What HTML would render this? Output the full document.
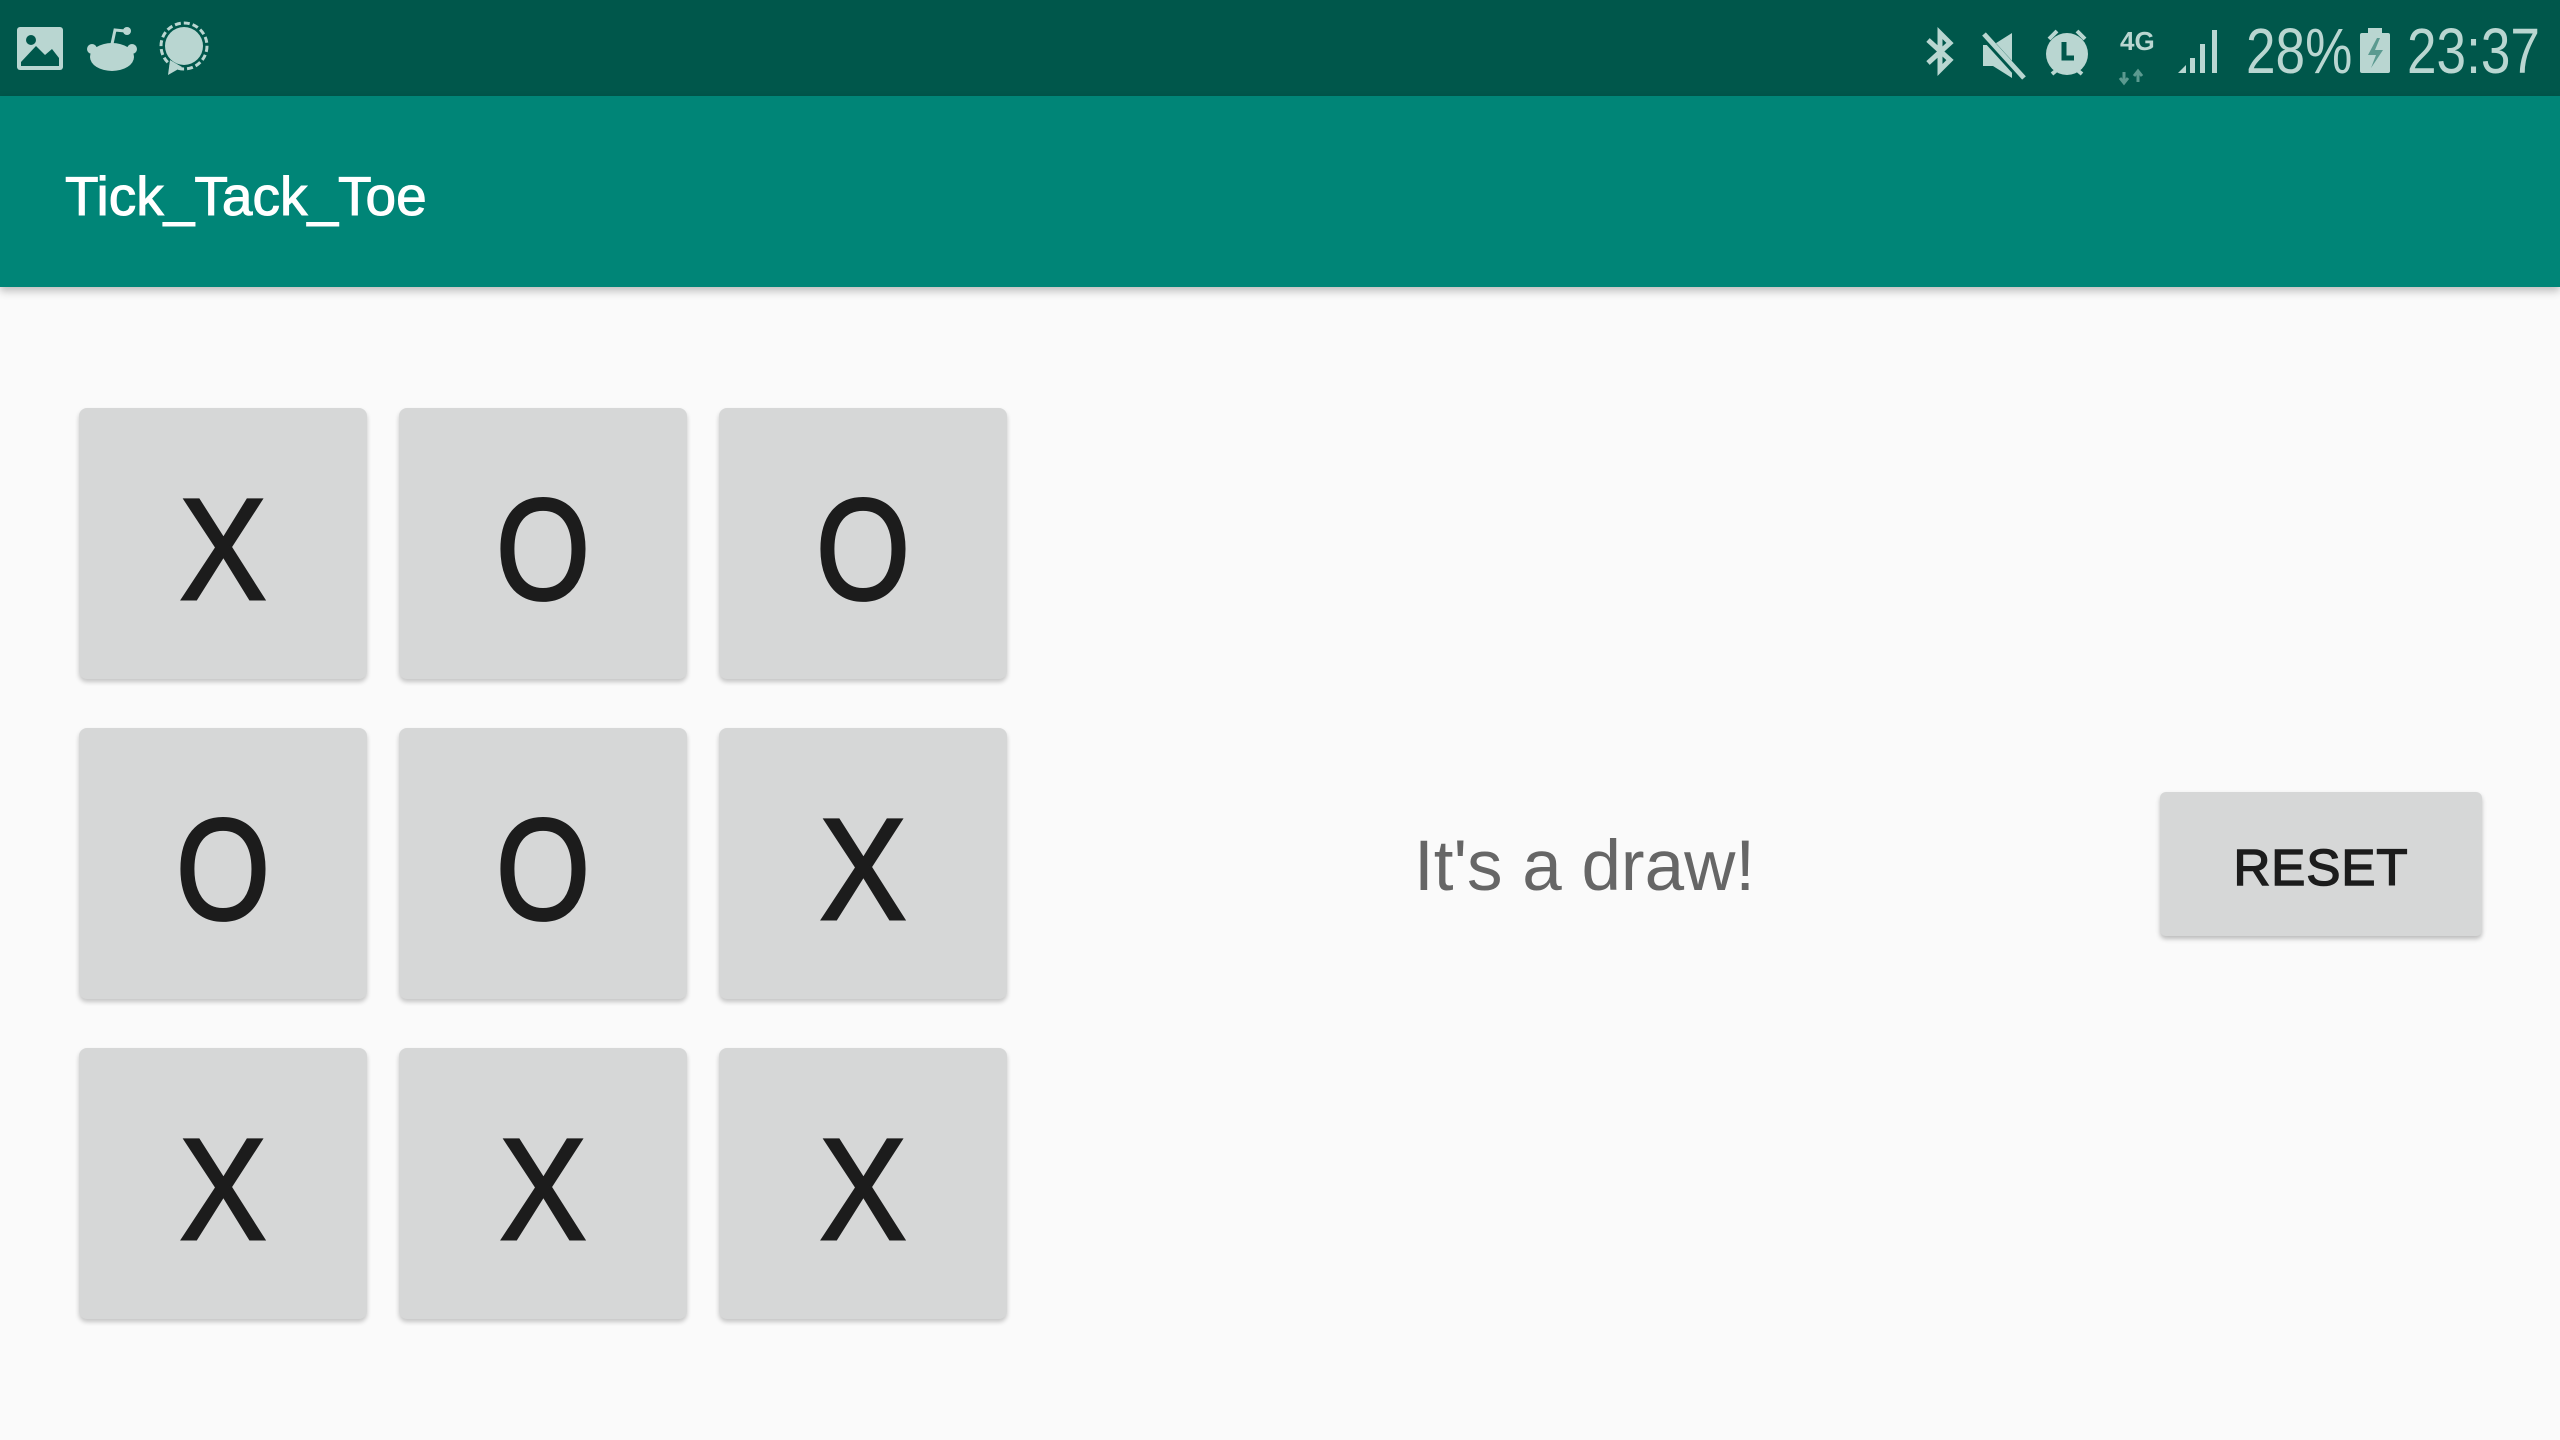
<!DOCTYPE html>
<html><head><meta charset="utf-8"><style>
*{margin:0;padding:0;box-sizing:border-box}
body{width:2560px;height:1440px;background:#fafafa;font-family:"Liberation Sans",sans-serif;position:relative;overflow:hidden}
.sb{position:absolute;left:0;top:0;width:2560px;height:96px;background:#00574b}
.ab{position:absolute;left:0;top:96px;width:2560px;height:191px;background:#008577;box-shadow:0 4px 8px rgba(0,0,0,.25)}
.title{position:absolute;left:65px;top:166px;color:#fff;font-size:55px;line-height:60px;-webkit-text-stroke:1px #fff}
.cell{position:absolute;width:288px;height:271px;background:#d6d7d7;border-radius:8px;box-shadow:0 3px 5px rgba(0,0,0,.22);color:#1c1c1c;font-size:144px;line-height:283px;text-align:center;-webkit-text-stroke:3px #1c1c1c}
.cell span{display:inline-block;transform:scaleX(.9)}
.o span{transform:scaleX(.84)}
.msg{position:absolute;left:1414px;top:825px;font-size:71px;line-height:84px;color:#666}
.reset{position:absolute;left:2160px;top:792px;width:322px;height:144px;background:#d6d7d7;border-radius:6px;box-shadow:0 3px 5px rgba(0,0,0,.25);font-size:51px;color:#1c1c1c;text-align:center;line-height:152px;letter-spacing:1px;-webkit-text-stroke:1.5px #1c1c1c}
.st{position:absolute;color:#b9d6d1;font-size:64px;line-height:64px;top:19px;transform-origin:left center;transform:scaleX(.83)}
</style></head><body>
<div class="sb">
<svg style="position:absolute;left:0;top:0" width="2560" height="96" fill="#b9d6d1">
<rect x="17" y="27" width="46" height="43" rx="3"/>
<path d="M21 62 L36 46 L45 55 L52 49 L59 58 L59 66 L21 66Z" fill="#00574b"/>
<circle cx="31" cy="40" r="5" fill="#00574b"/>
<ellipse cx="112" cy="57" rx="22" ry="14"/><circle cx="92" cy="49" r="5"/><circle cx="132" cy="49" r="5"/>
<path d="M112 44 L115 30 L125 31" stroke="#b9d6d1" stroke-width="3" fill="none"/><circle cx="127" cy="31" r="4"/>
<circle cx="184" cy="46" r="23" fill="none" stroke="#b9d6d1" stroke-width="3" stroke-dasharray="6 3"/><circle cx="184" cy="46" r="19"/><path d="M170 60 L168 75 L182 67Z"/>
<path d="M1928 40 L1950 60 L1940 70 L1940 33 L1950 43 L1928 63" stroke="#b9d6d1" stroke-width="5" fill="none"/>
<path d="M1983 45 L1993 45 L2012 33 L2012 78 L1993 66 L1983 66Z"/><path d="M1984 36 L2024 80" stroke="#00574b" stroke-width="8"/><path d="M1984 34 L2024 78" stroke="#b9d6d1" stroke-width="5"/>
<circle cx="2067" cy="54" r="21"/><path d="M2049 39 l8 -8 M2085 39 l-8 -8 M2052 74 l6 -5 M2082 74 l-6 -5" stroke="#b9d6d1" stroke-width="4"/><path d="M2064 42 v16 h10" stroke="#00574b" stroke-width="5" fill="none"/>
<text x="2120" y="50" font-size="26" font-family="Liberation Sans" font-weight="bold">4G</text>
<path d="M2124 72 v10 M2120 78 l4 5 l4 -5 M2138 82 v-10 M2134 76 l4 -5 l4 5" stroke="#5b9a90" stroke-width="3" fill="none"/>
<path d="M2178 73 L2186 65 L2186 73Z M2190 58 h5 v15 h-5Z M2200 44 h5 v29 h-5Z M2212 30 h5 v43 h-5Z"/>
<rect x="2360" y="33" width="30" height="40" rx="2"/><rect x="2368" y="28" width="14" height="6"/>
<path d="M2377 38 L2368 55 L2376 55 L2371 68 L2383 50 L2375 50 L2380 38Z" fill="#5b9a90"/>
</svg>
<div class="st" style="left:2246px">28%</div>
<div class="st" style="left:2407px">23:37</div>
</div>
<div class="ab"></div>
<div class="title">Tick_Tack_Toe</div>
<div class="cell" style="left:79px;top:408px"><span>X</span></div>
<div class="cell o" style="left:399px;top:408px"><span>O</span></div>
<div class="cell o" style="left:719px;top:408px"><span>O</span></div>
<div class="cell o" style="left:79px;top:728px"><span>O</span></div>
<div class="cell o" style="left:399px;top:728px"><span>O</span></div>
<div class="cell" style="left:719px;top:728px"><span>X</span></div>
<div class="cell" style="left:79px;top:1048px"><span>X</span></div>
<div class="cell" style="left:399px;top:1048px"><span>X</span></div>
<div class="cell" style="left:719px;top:1048px"><span>X</span></div>
<div class="msg">It's a draw!</div>
<div class="reset">RESET</div>
</body></html>
